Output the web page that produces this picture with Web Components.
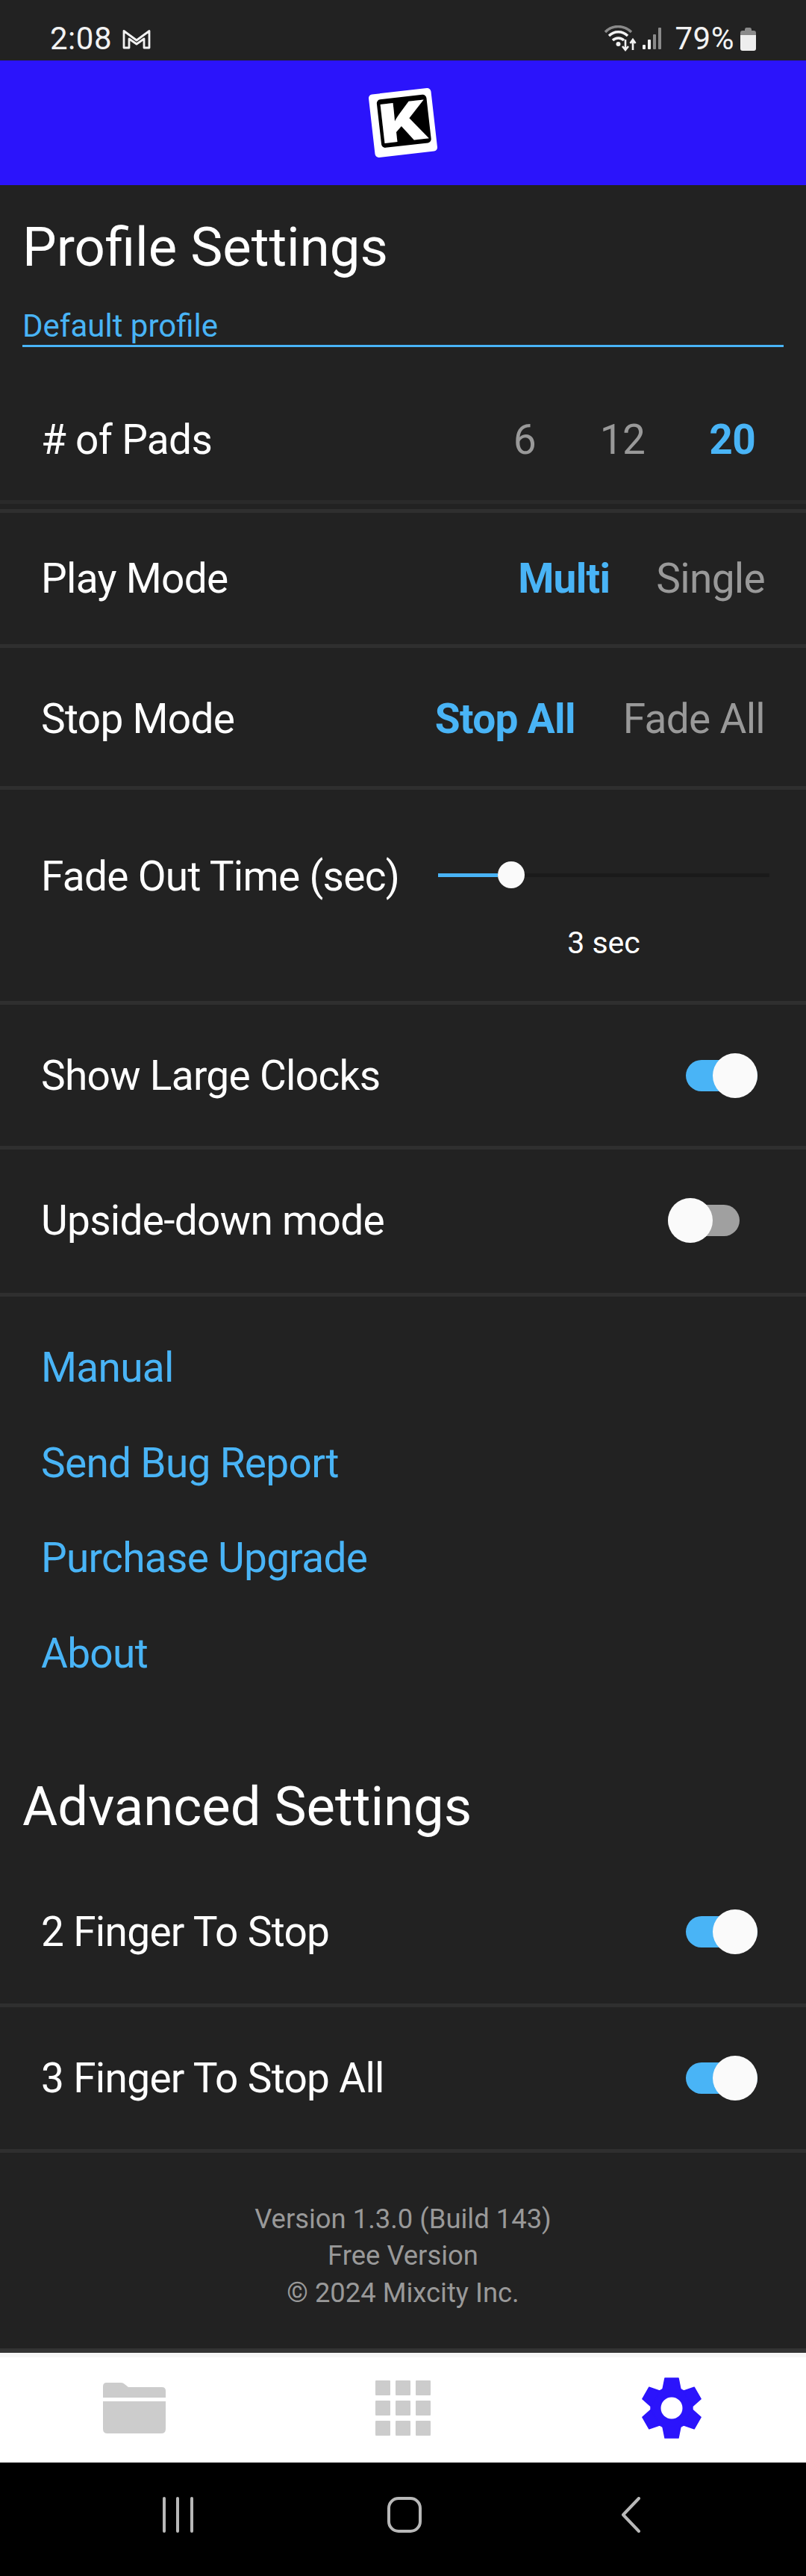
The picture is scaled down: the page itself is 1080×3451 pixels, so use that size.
<!DOCTYPE html>
<html>
<head>
<meta charset="utf-8">
<style>
  html, body { margin: 0; padding: 0; background: #222222; }
  body { width: 1080px; height: 3451px; overflow: hidden; font-family: Roboto, "Liberation Sans", sans-serif; color: #fff; display: flex; flex-direction: column; }
  .r-pads { height: 163px; margin-top: 42px; }
  .r-play { height: 176px; }
  .r-stop { height: 181px; padding-top: 4px; }
  .r-fade { height: 288px; align-items: flex-start; padding-top: 84px; box-sizing: border-box; }
  .r-clocks { height: 189px; }
  .r-upside { height: 190px; padding-bottom: 2px; }
  .r-two { height: 191px; }
  .r-three { height: 190px; }
  .extra { display: block; height: 7px; border-bottom: 5px solid #2f2f2f; }
</style>
</head>
<body>
<status-bar></status-bar>
<app-header></app-header>
<section-title style="margin-top:42px">Profile Settings</section-title>
<profile-input>Default profile</profile-input>

<setting-row class="r-pads" line="dark"><span>#&nbsp;of Pads</span><seg-control slot="control" options="6|12|20" active="20" gap="86" pad="13"></seg-control></setting-row>
<div class="extra"></div>
<setting-row class="r-play"><span>Play Mode</span><seg-control slot="control" options="Multi|Single" active="Multi" gap="62"></seg-control></setting-row>
<setting-row class="r-stop"><span>Stop Mode</span><seg-control slot="control" options="Stop All|Fade All" active="Stop All" gap="64"></seg-control></setting-row>
<setting-row class="r-fade"><span>Fade Out Time (sec)</span><fade-slider slot="control" value="3 sec"></fade-slider></setting-row>
<setting-row class="r-clocks"><span>Show Large Clocks</span><toggle-switch slot="control" on></toggle-switch></setting-row>
<setting-row class="r-upside"><span>Upside-down mode</span><toggle-switch slot="control"></toggle-switch></setting-row>

<link-list>
  <a>Manual</a>
  <a>Send Bug Report</a>
  <a>Purchase Upgrade</a>
  <a>About</a>
</link-list>

<section-title style="margin-top:132px">Advanced Settings</section-title>
<setting-row class="r-two" style="margin-top:30px"><span>2 Finger To Stop</span><toggle-switch slot="control" on></toggle-switch></setting-row>
<setting-row class="r-three"><span>3 Finger To Stop All</span><toggle-switch slot="control" on></toggle-switch></setting-row>

<version-info>
  <div>Version 1.3.0 (Build 143)</div>
  <div>Free Version</div>
  <div>© 2024 Mixcity Inc.</div>
</version-info>
<tab-bar></tab-bar>
<nav-bar></nav-bar>

<script>
class StatusBar extends HTMLElement {
  connectedCallback() {
    this.attachShadow({ mode: 'open' }).innerHTML = `
    <style>
      :host { display: flex; align-items: center; height: 81px; padding: 22px 67px 0 67px; box-sizing: border-box; background: #222; font-size: 42px; letter-spacing: 0.5px; color: #f2f2f2; }
      .right { margin-left: auto; display: flex; align-items: center; }
      .pct { margin: 0 8px 0 14px; }
      svg { display: block; }
    </style>
    <span class="time">2:08</span>
    <svg width="40" height="30" viewBox="0 0 40 30" style="margin-left:13px">
      <path d="M3 27V4.500L20 17 37 4.500V27H30V15L20 22 10 15V27Z" fill="none" stroke="#f2f2f2" stroke-width="2.800" stroke-linejoin="round"/>
    </svg>
    <div class="right">
      <svg width="82" height="36" viewBox="0 0 82 36">
        <path d="M2 9C11 -1 27 -1 37 9" fill="none" stroke="#8a8a8a" stroke-width="3.400"/>
        <path d="M7 14C14 7 25 7 32 14" fill="none" stroke="#f2f2f2" stroke-width="3.400"/>
        <path d="M12 20C16 16 23 16 27 20" fill="none" stroke="#f2f2f2" stroke-width="3.400"/>
        <circle cx="19.500" cy="25" r="3" fill="#f2f2f2"/>
        <path d="M29 19V32M25 28L29 33 33 28" fill="none" stroke="#f2f2f2" stroke-width="2.600"/>
        <path d="M39 33V20M35.500 24L39 19 42.500 24" fill="none" stroke="#f2f2f2" stroke-width="2.600"/>
        <rect x="52" y="26" width="4" height="6" rx="1" fill="#f2f2f2"/>
        <rect x="59" y="19" width="4" height="13" rx="1" fill="#f2f2f2"/>
        <rect x="66" y="12" width="4" height="20" rx="1" fill="#8a8a8a"/>
        <rect x="73" y="3" width="4" height="29" rx="1" fill="#8a8a8a"/>
      </svg>
      <span class="pct">79%</span>
      <svg width="21" height="32" viewBox="0 0 21 32">
        <path d="M6 3.500Q6 1 8 1H13Q15 1 15 3.500V5H18Q21 5 21 8V11H0V8Q0 5 3 5H6Z" fill="#8a8a8a"/>
        <path d="M0 11H21V29Q21 32 18 32H3Q0 32 0 29Z" fill="#eeeeee"/>
      </svg>
    </div>`;
  }
}

class AppHeader extends HTMLElement {
  connectedCallback() {
    this.attachShadow({ mode: 'open' }).innerHTML = `
    <style>
      :host { display: flex; align-items: center; justify-content: center; height: 167px; background: #2b14fb; }
      .card { width: 84px; height: 85px; box-sizing: border-box; background: #fff; border-radius: 5px; padding: 8px 7px 0 10px; transform: rotate(-6.500deg); }
      .k { height: 65px; background: #000; border-radius: 5px; display: flex; align-items: center; justify-content: center; }
      .k span { display: block; color: #fff; font: 900 72px/65px Inter, "Liberation Sans", sans-serif; transform: scaleX(1.2); }
    </style>
    <div class="card"><div class="k"><span>K</span></div></div>`;
  }
}

class SectionTitle extends HTMLElement {
  connectedCallback() {
    this.attachShadow({ mode: 'open' }).innerHTML = `
    <style>
      :host { display: block; padding-left: 30px; font-size: 72.500px; line-height: 84px; color: #fff; }
    </style>
    <slot></slot>`;
  }
}

class ProfileInput extends HTMLElement {
  connectedCallback() {
    this.attachShadow({ mode: 'open' }).innerHTML = `
    <style>
      :host { display: block; margin: 38px 30px 0 30px; font-size: 42px; line-height: 50px; color: #49b4f6; border-bottom: 3px solid #49b4f6; }
    </style>
    <slot></slot>`;
  }
}

class SettingRow extends HTMLElement {
  connectedCallback() {
    this.attachShadow({ mode: 'open' }).innerHTML = `
    <style>
      :host { display: flex; align-items: center; justify-content: space-between; padding: 0 55px; border-bottom: 5px solid #2f2f2f; font-size: 55px; letter-spacing: -0.700px; line-height: 64px; color: #fff; }
      :host([line="dark"]) { border-bottom-color: #2a2a2a; }
      slot[name=control] { display: block; }
    </style>
    <div><slot></slot></div>
    <slot name="control"></slot>`;
  }
}

class SegControl extends HTMLElement {
  connectedCallback() {
    let active = this.getAttribute('active');
    let gap = this.getAttribute('gap');
    let pad = this.getAttribute('pad') || 0;
    let items = this.getAttribute('options').split('|').map(o =>
      `<span class="${o == active ? 'on' : ''}">${o}</span>`).join('');
    this.attachShadow({ mode: 'open' }).innerHTML = `
    <style>
      :host { display: flex; gap: ${gap}px; margin-right: ${pad}px; font-size: 55px; color: #999999; }
      .on { color: #49b4f6; font-weight: 700; }
    </style>
    ${items}`;
  }
}

class FadeSlider extends HTMLElement {
  connectedCallback() {
    this.attachShadow({ mode: 'open' }).innerHTML = `
    <style>
      :host { display: block; width: 444px; margin-right: -6px; }
      .bar { position: relative; height: 64px; }
      .rest { position: absolute; left: 0; right: 0; top: 28px; height: 5px; background: #1a1a1a; }
      .fill { position: absolute; left: 0; width: 80px; top: 28px; height: 5px; background: #49b4f6; }
      .thumb { position: absolute; left: 80px; top: 12px; width: 36px; height: 36px; border-radius: 50%; background: #fafafa; }
      .val { margin-top: 33px; text-align: center; font-size: 41px; letter-spacing: 0; line-height: 48px; color: #fff; }
    </style>
    <div class="bar"><div class="rest"></div><div class="fill"></div><div class="thumb"></div></div>
    <div class="val">${this.getAttribute('value')}</div>`;
  }
}

class ToggleSwitch extends HTMLElement {
  connectedCallback() {
    let on = this.hasAttribute('on');
    this.attachShadow({ mode: 'open' }).innerHTML = `
    <style>
      :host { display: block; position: relative; width: 120px; height: 60px; margin-right: 10px; }
      .track { position: absolute; top: 9px; left: ${on ? 24 : 0}px; width: 96px; height: 42px; border-radius: 21px; background: ${on ? '#49b4f6' : '#a0a0a0'}; }
      .thumb { position: absolute; top: 0; left: ${on ? 60 : 0}px; width: 60px; height: 60px; border-radius: 50%; background: #fafafa; }
    </style>
    <div class="track"></div><div class="thumb"></div>`;
  }
}

class LinkList extends HTMLElement {
  connectedCallback() {
    this.attachShadow({ mode: 'open' }).innerHTML = `
    <style>
      :host { display: flex; flex-direction: column; gap: 63.500px; padding: 63px 55px 0 55px; font-size: 55px; letter-spacing: -0.700px; line-height: 64px; color: #49b4f6; }
    </style>
    <slot></slot>`;
  }
}

class VersionInfo extends HTMLElement {
  connectedCallback() {
    this.attachShadow({ mode: 'open' }).innerHTML = `
    <style>
      :host { display: block; flex: 1; padding-top: 64px; text-align: center; font-size: 36.400px; line-height: 49.500px; color: #999999; border-bottom: 6px solid #333; box-sizing: border-box; }
    </style>
    <slot></slot>`;
  }
}

class TabBar extends HTMLElement {
  connectedCallback() {
    let cells = '<i></i>'.repeat(9);
    this.attachShadow({ mode: 'open' }).innerHTML = `
    <style>
      :host { display: grid; grid-template-columns: repeat(3, 360px); height: 147px; background: #fff; border-top: 6px solid #f6f6f6; box-sizing: border-box; }
      .tab { display: flex; align-items: center; justify-content: center; padding-bottom: 6px; }
      .grid { display: grid; grid-template-columns: repeat(3, 20px); grid-auto-rows: 20px; gap: 7px; }
      .grid i { display: block; background: #cccccc; border-radius: 1px; }
      svg { display: block; }
    </style>
    <div class="tab">
      <svg width="84" height="68" viewBox="0 0 84 68">
        <path d="M0 5Q0 0 5 0H24Q27 0 29 2L34 6H79Q84 6 84 11V20H0Z" fill="#cccccc"/>
        <path d="M0 25H84V62Q84 68 78 68H6Q0 68 0 62Z" fill="#cccccc"/>
      </svg>
    </div>
    <div class="tab"><div class="grid">${cells}</div></div>
    <div class="tab">
      <svg width="82" height="82" viewBox="-41 -41 82 82">
        <g fill="#2b14fb" stroke="#2b14fb" stroke-width="1.500" stroke-linejoin="round">
          <circle r="28"/>
          <path d="M-9 -40H9L12 -25H-12Z"/>
          <path d="M-9 -40H9L12 -25H-12Z" transform="rotate(60)"/>
          <path d="M-9 -40H9L12 -25H-12Z" transform="rotate(120)"/>
          <path d="M-9 -40H9L12 -25H-12Z" transform="rotate(180)"/>
          <path d="M-9 -40H9L12 -25H-12Z" transform="rotate(240)"/>
          <path d="M-9 -40H9L12 -25H-12Z" transform="rotate(300)"/>
        </g>
        <circle r="14.500" fill="#fff"/>
      </svg>
    </div>`;
  }
}

class NavBar extends HTMLElement {
  connectedCallback() {
    this.attachShadow({ mode: 'open' }).innerHTML = `
    <style>
      :host { display: flex; align-items: flex-start; justify-content: center; height: 152px; background: #000; padding: 46px 0 0 4px; box-sizing: border-box; }
      .b { width: 303px; display: flex; justify-content: center; }
      svg { display: block; }
    </style>
    <div class="b"><svg width="44" height="48" viewBox="0 0 44 48"><path d="M3 2V46M21 2V46M40 2V46" stroke="#b8b8b8" stroke-width="4" fill="none" stroke-linecap="round"/></svg></div>
    <div class="b"><svg width="46" height="48" viewBox="0 0 46 48"><rect x="2" y="2" width="42" height="44" rx="13" fill="none" stroke="#b8b8b8" stroke-width="4"/></svg></div>
    <div class="b"><svg width="26" height="48" viewBox="0 0 26 48"><path d="M24 2L3 24 24 46" fill="none" stroke="#b8b8b8" stroke-width="4" stroke-linecap="round" stroke-linejoin="round"/></svg></div>`;
  }
}

customElements.define('status-bar', StatusBar);
customElements.define('app-header', AppHeader);
customElements.define('section-title', SectionTitle);
customElements.define('profile-input', ProfileInput);
customElements.define('setting-row', SettingRow);
customElements.define('seg-control', SegControl);
customElements.define('fade-slider', FadeSlider);
customElements.define('toggle-switch', ToggleSwitch);
customElements.define('link-list', LinkList);
customElements.define('version-info', VersionInfo);
customElements.define('tab-bar', TabBar);
customElements.define('nav-bar', NavBar);
</script>
</body>
</html>
